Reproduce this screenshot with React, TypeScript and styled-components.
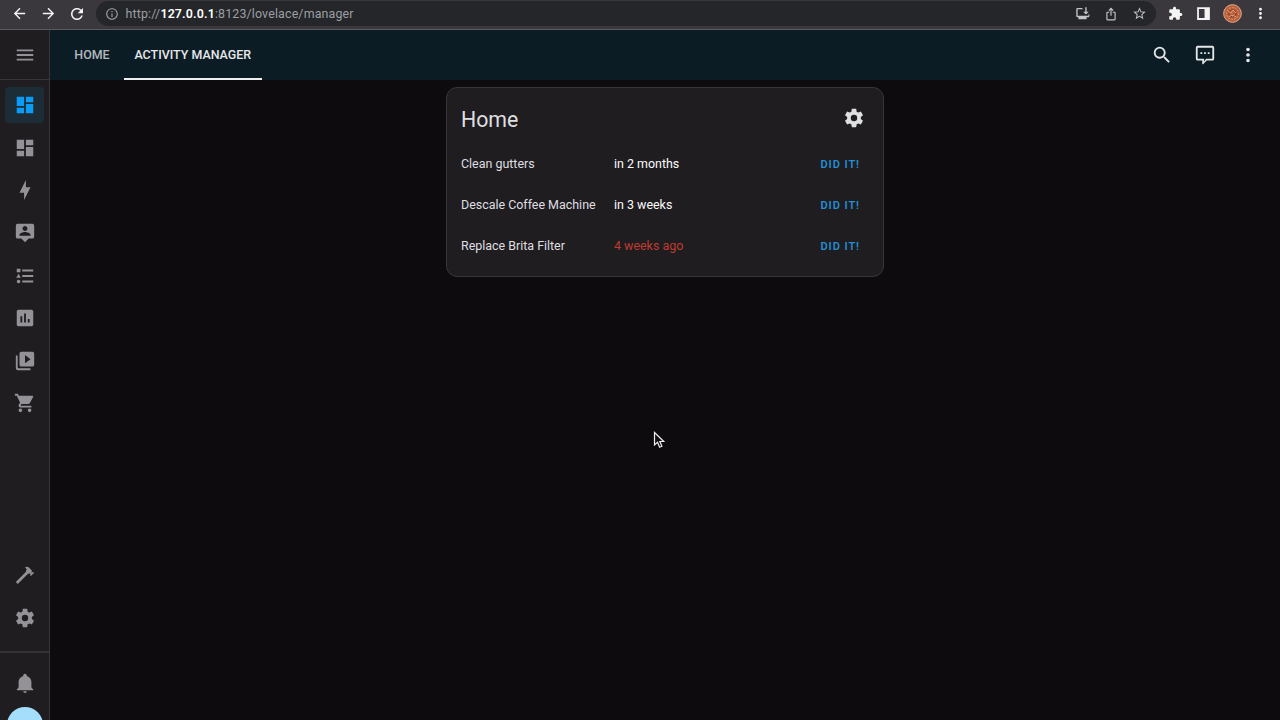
import React from "react";
import styled, { createGlobalStyle } from "styled-components";

const GlobalStyle = createGlobalStyle`
  * { box-sizing: border-box; }
  body { margin: 0; background: #0d0b0e; overflow: hidden; }
`;

const icons = {
  back: "M20 11H7.83l5.59-5.59L12 4l-8 8 8 8 1.41-1.41L7.83 13H20v-2z",
  forward: "M4 11h12.17l-5.59-5.59L12 4l8 8-8 8-1.41-1.41L16.17 13H4v-2z",
  reload:
    "M17.65 6.35C16.2 4.9 14.21 4 12 4c-4.42 0-7.99 3.58-7.99 8s3.57 8 7.99 8c3.73 0 6.84-2.55 7.73-6h-2.08c-.82 2.33-3.04 4-5.65 4-3.31 0-6-2.69-6-6s2.69-6 6-6c1.66 0 3.14.69 4.22 1.78L13 11h7V4l-2.35 2.35z",
  info: "M11 7h2v2h-2zM11 11h2v6h-2zM12 2C6.48 2 2 6.48 2 12s4.48 10 10 10 10-4.48 10-10S17.52 2 12 2zm0 18c-4.41 0-8-3.59-8-8s3.59-8 8-8 8 3.59 8 8-3.59 8-8 8z",
  install:
    "M12 3v2.200H4.200V15.500H21.500V13H23V16A2 2 0 0 1 21 18H18.500V21H5.500V18H4A2 2 0 0 1 2 16V5A2 2 0 0 1 4 3ZM16.400 2h2.200v7h3.400l-4.500 4.500L13 9h3.400z",
  share:
    "M12 1l4.5 4.5-1.4 1.4L13 4.8V15h-2V4.8L8.9 6.9 7.5 5.5zM9 8v2H6v11h12V10h-3V8h3a2 2 0 0 1 2 2v11a2 2 0 0 1-2 2H6a2 2 0 0 1-2-2V10a2 2 0 0 1 2-2z",
  star: "M22 9.24l-7.19-.62L12 2 9.19 8.63 2 9.24l5.46 4.73L5.82 21 12 17.27 18.18 21l-1.63-7.03L22 9.24zM12 15.4l-3.76 2.27 1-4.28-3.32-2.88 4.38-.38L12 6.1l1.71 4.04 4.38.38-3.32 2.88 1 4.28L12 15.4z",
  puzzle:
    "M20.5 11H19V7c0-1.1-.9-2-2-2h-4V3.5C13 2.12 11.88 1 10.5 1S8 2.12 8 3.5V5H4c-1.1 0-1.99.9-1.99 2v3.8H3.5c1.49 0 2.7 1.21 2.7 2.7s-1.21 2.7-2.7 2.7H2V20c0 1.1.9 2 2 2h3.8v-1.5c0-1.49 1.21-2.7 2.7-2.7 1.49 0 2.7 1.21 2.7 2.7V22H17c1.1 0 2-.9 2-2v-4h1.5c1.38 0 2.5-1.12 2.5-2.5S21.88 11 20.5 11z",
  panel: "M3 3H21V21H3zM5.5 5.5V18.5H13.5V5.5z",
  dots: "M12,16A2,2 0 0,1 14,18A2,2 0 0,1 12,20A2,2 0 0,1 10,18A2,2 0 0,1 12,16M12,10A2,2 0 0,1 14,12A2,2 0 0,1 12,14A2,2 0 0,1 10,12A2,2 0 0,1 12,10M12,4A2,2 0 0,1 14,6A2,2 0 0,1 12,8A2,2 0 0,1 10,6A2,2 0 0,1 12,4Z",
  menu: "M3,6H21V8H3V6M3,11H21V13H3V11M3,16H21V18H3V16Z",
  dashboard: "M13,3V9H21V3M13,21H21V11H13M3,21H11V15H3M3,13H11V3H3V13Z",
  bolt: "M11 15H6L13 1V9H18L11 23V15Z",
  person:
    "M20,2H4A2,2 0 0,0 2,4V16A2,2 0 0,0 4,18H8L12,22L16,18H20A2,2 0 0,0 22,16V4A2,2 0 0,0 20,2M12,4.3C13.5,4.3 14.7,5.5 14.7,7C14.7,8.5 13.5,9.7 12,9.7C10.5,9.7 9.3,8.5 9.3,7C9.3,5.5 10.5,4.3 12,4.3M18,15H6V14.1C6,12.1 10,11 12,11C14,11 18,12.1 18,14.1V15Z",
  list: "M5,9.5L7.5,14H2.5L5,9.5M3,4H7V8H3V4M5,20A2,2 0 0,0 7,18A2,2 0 0,0 5,16A2,2 0 0,0 3,18A2,2 0 0,0 5,20M9,5V7H21V5H9M9,19H21V17H9V19M9,13H21V11H9V13Z",
  chart:
    "M9 17H7V10H9V17M13 17H11V7H13V17M17 17H15V13H17V17M19 3H5C3.9 3 3 3.9 3 5V19C3 20.1 3.9 21 5 21H19C20.1 21 21 20.1 21 19V5C21 3.9 20.1 3 19 3Z",
  media:
    "M4 6H2V20C2 21.1 2.9 22 4 22H18V20H4V6M20 2H8C6.9 2 6 2.9 6 4V16C6 17.1 6.9 18 8 18H20C21.1 18 22 17.1 22 16V4C22 2.9 21.1 2 20 2M12 14.5V5.5L18 10L12 14.5Z",
  cart: "M17,18C15.89,18 15,18.89 15,20A2,2 0 0,0 17,22A2,2 0 0,0 19,20C19,18.89 18.1,18 17,18M1,2V4H3L6.6,11.59L5.24,14.04C5.09,14.32 5,14.65 5,15A2,2 0 0,0 7,17H19V15H7.42A0.25,0.25 0 0,1 7.17,14.75C7.17,14.7 7.18,14.66 7.2,14.63L8.1,13H15.55C16.3,13 16.96,12.58 17.3,11.97L20.88,5.5C20.95,5.34 21,5.17 21,5A1,1 0 0,0 20,4H5.21L4.27,2M7,18C5.89,18 5,18.89 5,20A2,2 0 0,0 7,22A2,2 0 0,0 9,20C9,18.89 8.1,18 7,18Z",
  hammer:
    "M2,19.63L13.43,8.2L12.72,7.5L14.14,6.07L12,3.89C13.2,2.7 15.09,2.7 16.27,3.89L19.87,7.5L18.45,8.91H21.29L22,9.62L18.45,13.21L17.74,12.5V9.62L16.27,11.04L15.56,10.33L4.13,21.76L2,19.63Z",
  cog: "M12,15.5A3.5,3.5 0 0,1 8.5,12A3.5,3.5 0 0,1 12,8.5A3.5,3.5 0 0,1 15.5,12A3.5,3.5 0 0,1 12,15.5M19.43,12.97C19.47,12.65 19.5,12.33 19.5,12C19.5,11.67 19.47,11.34 19.43,11L21.54,9.37C21.73,9.22 21.78,8.95 21.66,8.73L19.66,5.27C19.54,5.05 19.27,4.96 19.05,5.05L16.56,6.05C16.04,5.66 15.5,5.32 14.87,5.07L14.5,2.42C14.46,2.18 14.25,2 14,2H10C9.75,2 9.54,2.18 9.5,2.42L9.13,5.07C8.5,5.32 7.96,5.66 7.44,6.05L4.95,5.05C4.73,4.96 4.46,5.05 4.34,5.27L2.34,8.73C2.21,8.95 2.27,9.22 2.46,9.37L4.57,11C4.53,11.34 4.5,11.67 4.5,12C4.5,12.33 4.53,12.65 4.57,12.97L2.46,14.63C2.27,14.78 2.21,15.05 2.34,15.27L4.34,18.73C4.46,18.95 4.73,19.03 4.95,18.95L7.44,17.94C7.96,18.34 8.5,18.68 9.13,18.93L9.5,21.58C9.54,21.82 9.75,22 10,22H14C14.25,22 14.46,21.82 14.5,21.58L14.87,18.93C15.5,18.67 16.04,18.34 16.56,17.94L19.05,18.95C19.27,19.03 19.54,18.95 19.66,18.73L21.66,15.27C21.78,15.05 21.73,14.78 21.54,14.63L19.43,12.97Z",
  bell: "M21,19V20H3V19L5,17V11C5,7.9 7.03,5.17 10,4.29C10,4.19 10,4.1 10,4A2,2 0 0,1 12,2A2,2 0 0,1 14,4C14,4.1 14,4.19 14,4.29C16.97,5.17 19,7.9 19,11V17L21,19M14,21A2,2 0 0,1 12,23A2,2 0 0,1 10,21",
  search:
    "M9.5,3A6.5,6.5 0 0,1 16,9.5C16,11.11 15.41,12.59 14.44,13.73L14.71,14H15.5L20.5,19L19,20.5L14,15.5V14.71L13.73,14.44C12.59,15.41 11.11,16 9.5,16A6.5,6.5 0 0,1 3,9.5A6.5,6.5 0 0,1 9.5,3M9.5,5C7,5 5,7 5,9.5C5,12 7,14 9.5,14C12,14 14,12 14,9.5C14,7 12,5 9.5,5Z",
  chat: "M4,2H20A2,2 0 0,1 22,4V16A2,2 0 0,1 20,18H13.9L10.2,21.7C10,21.9 9.75,22 9.5,22H9V18H4A2,2 0 0,1 2,16V4A2,2 0 0,1 4,2M4,4V16H11V19.08L13.08,16H20V4ZM7,9H9V11H7ZM11,9H13V11H11ZM15,9H17V11H15Z",
};

type IconName = keyof typeof icons;

const Svg = styled.svg`
  display: block;
  flex: none;
  fill: currentColor;
`;

const Icon = ({ name, size = 22 }: { name: IconName; size?: number }) => (
  <Svg width={size} height={size} viewBox="0 0 24 24">
    <path fillRule="evenodd" d={icons[name]} />
  </Svg>
);

const Screen = styled.div`
  width: 1280px;
  height: 720px;
  display: flex;
  flex-direction: column;
  overflow: hidden;
  background: #0d0b0e;
  font-family: Roboto, "Liberation Sans", sans-serif;
`;

const BrowserBar = styled.header`
  flex: none;
  height: 30px;
  padding: 1px 5px 3px;
  display: flex;
  align-items: center;
  background: #3a383c;
  border-bottom: 1px solid #5c5b5f;
`;

const BrowserButton = styled.span<{ $dim?: boolean }>`
  width: 28.5px;
  height: 24px;
  display: flex;
  align-items: center;
  justify-content: center;
  color: ${(p) => (p.$dim ? "#c3c4c6" : "#f4f4f5")};
`;

const NavButtons = styled.div`
  display: flex;
  padding-left: 0.4px;
  margin-right: -0.4px;
`;

const AddressBar = styled.div`
  flex: 1;
  height: 25px;
  margin: 0 5px;
  padding: 0 2px 0 9px;
  display: flex;
  align-items: center;
  border-radius: 13px;
  background: #242629;
  color: #9c9fa3;
`;

const Url = styled.span`
  flex: 1;
  margin-left: 7px;
  font-size: 12.4px;
  letter-spacing: 0.16px;
  line-height: 16px;
  b { color: #fff; font-weight: 600; }
`;

const Workspace = styled.div`
  flex: 1;
  min-height: 0;
  display: flex;
`;

const Sidebar = styled.aside`
  flex: none;
  width: 50px;
  display: flex;
  flex-direction: column;
  background: #1f1d20;
  border-right: 1px solid #373539;
  color: #949296;
`;

const MenuButton = styled.div`
  flex: none;
  height: 50px;
  display: grid;
  place-items: center;
  border-bottom: 1px solid #373539;
`;

const SideList = styled.nav`
  flex: 1;
  display: flex;
  flex-direction: column;
  gap: 6.65px;
  padding: 7px 5px 15px;
`;

const SideItem = styled.div<{ $active?: boolean; $pushed?: boolean }>`
  height: 36px;
  display: grid;
  place-items: center;
  border-radius: 4px;
  margin-top: ${(p) => (p.$pushed ? "auto" : "0")};
  background: ${(p) => (p.$active ? "#1c2d37" : "transparent")};
  color: ${(p) => (p.$active ? "#0a9bf7" : "inherit")};
`;

const SideFooter = styled.div`
  flex: none;
  height: 69px;
  padding-top: 19px;
  display: flex;
  flex-direction: column;
  align-items: center;
  gap: 13px;
  border-top: 2px solid #343236;
  overflow: hidden;
`;

const UserBadge = styled.span`
  flex: none;
  width: 36px;
  height: 36px;
  border-radius: 50%;
  background: #a5defd;
`;

const Main = styled.main`
  flex: 1;
  display: flex;
  flex-direction: column;
`;

const Toolbar = styled.div`
  flex: none;
  height: 50px;
  padding: 0 11px 0 14px;
  display: flex;
  background: #0c1c24;
  color: #e4e6e8;
`;

const Tab = styled.div<{ $active?: boolean }>`
  width: ${(p) => (p.$active ? 138 : 60)}px;
  padding-bottom: ${(p) => (p.$active ? 0 : 2)}px;
  padding-right: ${(p) => (p.$active ? 0.5 : 4)}px;
  display: flex;
  align-items: center;
  justify-content: center;
  border-bottom: ${(p) => (p.$active ? "2px solid #eceeef" : "none")};
  color: ${(p) => (p.$active ? "#e6e8ea" : "#b4b9bd")};
  font-size: 12.45px;
  font-weight: 500;
  white-space: nowrap;
`;

const Actions = styled.div`
  margin-left: auto;
  display: flex;
`;

const ActionButton = styled.span`
  width: 43px;
  display: grid;
  place-items: center;
`;

const Card = styled.section`
  width: 438px;
  height: 190px;
  margin: 7px 0 0 396px;
  padding: 0 14px;
  border: 1px solid #38363a;
  border-radius: 11px;
  background: #1f1d20;
  color: #dfdfe1;
`;

const CardHeader = styled.div`
  height: 55px;
  padding: 5px 4px 0 0;
  display: flex;
  align-items: center;
  justify-content: space-between;
`;

const CardTitle = styled.h1`
  margin: 4px 0 0;
  font-size: 21.3px;
  font-weight: 400;
  line-height: 28px;
`;

const ActivityRow = styled.div`
  height: 41px;
  display: grid;
  grid-template-columns: 153px 1fr auto;
  align-items: center;
  padding-right: 9px;
  font-size: 12.45px;
`;

const Due = styled.span<{ $late: boolean }>`
  color: ${(p) => (p.$late ? "#bf3b30" : "#fbfbfc")};
`;

const DoneButton = styled.span`
  padding-top: 1px;
  color: #1f8fd6;
  font-size: 11.1px;
  font-weight: 600;
  letter-spacing: 0.9px;
`;

const Cursor = styled.svg`
  position: absolute;
  left: 652.5px;
  top: 431px;
`;

const sideItems: IconName[] = ["dashboard", "dashboard", "bolt", "person", "list", "chart", "media", "cart"];

const activities = [
  { name: "Clean gutters", due: "in 2 months", late: false },
  { name: "Descale Coffee Machine", due: "in 3 weeks", late: false },
  { name: "Replace Brita Filter", due: "4 weeks ago", late: true },
];

const ProfilePicture = () => (
  <svg width="19" height="19" viewBox="0 0 19 19" fill="none">
    <circle cx="9.5" cy="9.5" r="9.2" fill="#b9603c" />
    <circle cx="9.5" cy="9.5" r="8.8" stroke="#d4a58c" strokeWidth="1" />
    <circle cx="9.5" cy="9.5" r="6" stroke="#e0a37e" strokeWidth="1" strokeDasharray="1.5 1.5" />
    <circle cx="9.5" cy="9.5" r="3.5" stroke="#7f3524" strokeWidth="1.2" strokeDasharray="2 1" />
    <path d="M5 7l3 2 2-3 3 3M6 13l3-2 4 2" stroke="#e7ae84" strokeWidth=".8" />
  </svg>
);

export default function App() {
  return (
    <Screen>
      <GlobalStyle />
      <BrowserBar>
        <NavButtons>
          <BrowserButton><Icon name="back" size={17} /></BrowserButton>
          <BrowserButton><Icon name="forward" size={17} /></BrowserButton>
          <BrowserButton><Icon name="reload" size={18} /></BrowserButton>
        </NavButtons>
        <AddressBar>
          <Icon name="info" size={14} />
          <Url>http://<b>127.0.0.1</b>:8123/lovelace/manager</Url>
          <BrowserButton $dim><Icon name="install" size={15} /></BrowserButton>
          <BrowserButton $dim><Icon name="share" size={14} /></BrowserButton>
          <BrowserButton $dim><Icon name="star" size={15} /></BrowserButton>
        </AddressBar>
        <BrowserButton><Icon name="puzzle" size={15} /></BrowserButton>
        <BrowserButton><Icon name="panel" size={17} /></BrowserButton>
        <BrowserButton><ProfilePicture /></BrowserButton>
        <BrowserButton><Icon name="dots" size={17} /></BrowserButton>
      </BrowserBar>
      <Workspace>
        <Sidebar>
          <MenuButton><Icon name="menu" /></MenuButton>
          <SideList>
            {sideItems.map((name, i) => (
              <SideItem key={i} $active={i === 0}><Icon name={name} /></SideItem>
            ))}
            <SideItem $pushed><Icon name="hammer" /></SideItem>
            <SideItem><Icon name="cog" /></SideItem>
          </SideList>
          <SideFooter>
            <Icon name="bell" />
            <UserBadge />
          </SideFooter>
        </Sidebar>
        <Main>
          <Toolbar>
            <Tab>HOME</Tab>
            <Tab $active>ACTIVITY MANAGER</Tab>
            <Actions>
              <ActionButton><Icon name="search" /></ActionButton>
              <ActionButton><Icon name="chat" /></ActionButton>
              <ActionButton><Icon name="dots" /></ActionButton>
            </Actions>
          </Toolbar>
          <Card>
            <CardHeader>
              <CardTitle>Home</CardTitle>
              <Icon name="cog" />
            </CardHeader>
            {activities.map((a) => (
              <ActivityRow key={a.name}>
                <span>{a.name}</span>
                <Due $late={a.late}>{a.due}</Due>
                <DoneButton>DID IT!</DoneButton>
              </ActivityRow>
            ))}
          </Card>
        </Main>
      </Workspace>
      <Cursor width="12" height="18" viewBox="0 0 12 18">
        <path d="M1.5 1.5V14L4.5 11.3L6.6 16.3L8.9 15.3L6.8 10.5H10.8Z" fill="#111" stroke="#ededed" strokeWidth="1.2" />
      </Cursor>
    </Screen>
  );
}
